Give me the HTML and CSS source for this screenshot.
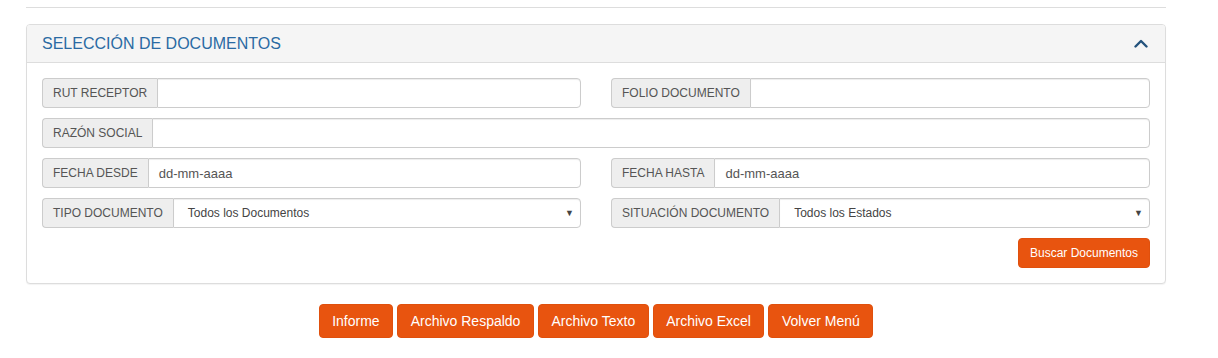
FILE: index.html
```html
<!DOCTYPE html>
<html lang="es">
<head>
<meta charset="utf-8">
<title>Selección de documentos</title>
<link rel="stylesheet" href="styles.css">
</head>
<body>
<div class="page">
  <div class="rule"></div>
  <section class="panel">
    <header class="panel-heading">
      <h3 class="panel-title">SELECCIÓN DE DOCUMENTOS</h3>
      <svg class="chevron" width="14" height="10" viewBox="0 0 14 10" aria-hidden="true">
        <polyline points="1.5,8.5 7,3 12.5,8.5" fill="none" stroke="#23527c" stroke-width="2.4" stroke-linecap="round" stroke-linejoin="round"/>
      </svg>
    </header>
    <div class="panel-body">
      <div class="form-grid">
        <div class="input-group">
          <span class="addon">RUT RECEPTOR</span>
          <input class="field" type="text">
        </div>
        <div class="input-group">
          <span class="addon">FOLIO DOCUMENTO</span>
          <input class="field" type="text">
        </div>
        <div class="input-group full">
          <span class="addon">RAZÓN SOCIAL</span>
          <input class="field" type="text">
        </div>
        <div class="input-group">
          <span class="addon">FECHA DESDE</span>
          <div class="field date">dd-mm-aaaa</div>
        </div>
        <div class="input-group">
          <span class="addon">FECHA HASTA</span>
          <div class="field date">dd-mm-aaaa</div>
        </div>
        <div class="input-group">
          <span class="addon">TIPO DOCUMENTO</span>
          <div class="field select"><span>Todos los Documentos</span><span class="caret">▼</span></div>
        </div>
        <div class="input-group">
          <span class="addon">SITUACIÓN DOCUMENTO</span>
          <div class="field select"><span>Todos los Estados</span><span class="caret">▼</span></div>
        </div>
      </div>
      <div class="search-row">
        <button class="btn btn-sm" type="button">Buscar Documentos</button>
      </div>
    </div>
  </section>
  <div class="actions">
    <button class="btn" type="button">Informe</button>
    <button class="btn" type="button">Archivo Respaldo</button>
    <button class="btn" type="button">Archivo Texto</button>
    <button class="btn" type="button">Archivo Excel</button>
    <button class="btn" type="button">Volver Menú</button>
  </div>
</div>
</body>
</html>
```

FILE: styles.css
```css
* { box-sizing: border-box; }

html, body {
  margin: 0;
  padding: 0;
  background: #fff;
  font-family: "Liberation Sans", Arial, sans-serif;
  color: #333;
}

.page {
  width: 1140px;
  margin-left: 26px;
}

.rule {
  margin-top: 7px;
  border-top: 1px solid #ddd;
  height: 0;
}

.panel {
  margin-top: 16px;
  border: 1px solid #ddd;
  border-radius: 4px;
  background: #fff;
  box-shadow: 0 1px 1px rgba(0,0,0,0.05);
}

.panel-heading {
  display: flex;
  align-items: center;
  justify-content: space-between;
  height: 38px;
  padding: 0 17px 0 15px;
  background: #f5f5f5;
  border-bottom: 1px solid #ddd;
  border-radius: 3px 3px 0 0;
}

.panel-title {
  margin: 0;
  font-size: 16px;
  font-weight: normal;
  color: #2a6aa3;
  line-height: 18px;
}

.chevron { display: block; margin-top: -2px; }

.panel-body {
  padding: 15px;
}

.form-grid {
  display: grid;
  grid-template-columns: 1fr 1fr;
  column-gap: 30px;
  row-gap: 10px;
}

.input-group {
  display: flex;
  height: 30px;
}

.input-group.full { grid-column: 1 / 3; }

.addon {
  display: flex;
  align-items: center;
  padding: 0 10px;
  font-size: 12px;
  color: #555;
  background: #eee;
  border: 1px solid #ccc;
  border-right: 0;
  border-radius: 4px 0 0 4px;
  white-space: nowrap;
}

.field {
  flex: 1;
  min-width: 0;
  height: 30px;
  border: 1px solid #ccc;
  border-radius: 0 4px 4px 0;
  background: #fff;
  font-family: "Liberation Sans", Arial, sans-serif;
  color: #555;
  box-shadow: inset 0 1px 1px rgba(0,0,0,0.075);
  margin: 0;
  padding: 0 10px;
}

.date {
  display: flex;
  align-items: center;
  font-size: 13px;
  color: #555;
}

.select {
  display: flex;
  align-items: center;
  justify-content: space-between;
  font-size: 12px;
  color: #444;
  padding: 0 6px 0 14px;
}

.caret {
  font-size: 9px;
  color: #444;
}

.search-row {
  display: flex;
  justify-content: flex-end;
  margin-top: 10px;
}

.btn {
  font-family: "Liberation Sans", Arial, sans-serif;
  font-size: 14px;
  line-height: 20px;
  height: 34px;
  padding: 6px 12.5px;
  color: #fff;
  background: #e8540f;
  border: 1px solid #e0500d;
  border-radius: 4px;
  cursor: pointer;
}

.btn-sm {
  font-size: 12px;
  line-height: 18px;
  height: 30px;
  padding: 5px 11px;
}

.actions {
  display: flex;
  justify-content: center;
  gap: 4px;
  margin-top: 20px;
}
```
